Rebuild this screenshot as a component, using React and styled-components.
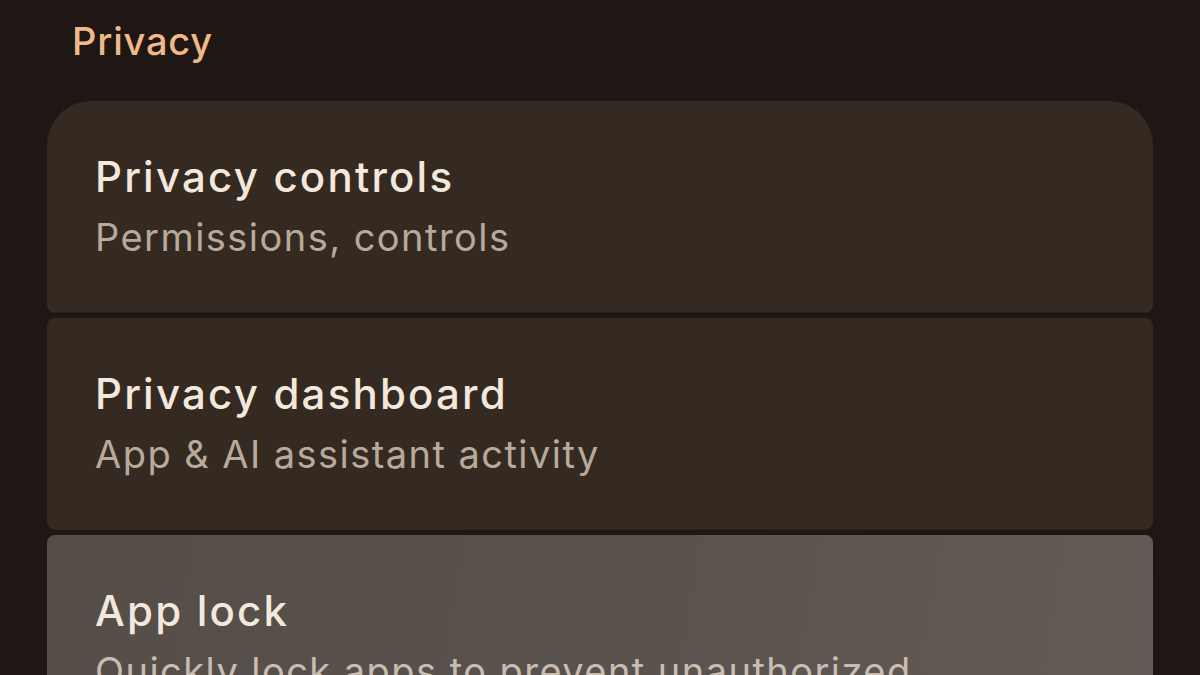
import React from "react";
import styled, { createGlobalStyle } from "styled-components";

const Global = createGlobalStyle`
  html, body { margin: 0; padding: 0; background: #1f1713; }
  body { font-family: Inter, "Open Sans", sans-serif; }
`;

const Screen = styled.div`
  width: 1200px;
  height: 675px;
  overflow: hidden;
  background: #1f1713;
  padding: 0 47px;
  box-sizing: border-box;
`;

const Header = styled.h2`
  margin: 0;
  padding: 16px 0 0 25px;
  height: 101px;
  box-sizing: border-box;
  font-size: 38px;
  font-weight: 500;
  line-height: 50px;
  letter-spacing: 0.8px;
  color: #f1b98a;
`;

const List = styled.div`
  display: flex;
  flex-direction: column;
  gap: 5px;
`;

const Card = styled.div`
  height: 212px;
  box-sizing: border-box;
  padding: 50px 48px 0;
  background: ${(p) =>
    p.$active
      ? "linear-gradient(100deg, #554d47 0%, #5a524c 55%, #635b54 100%)"
      : "#342a21"};
  border-radius: ${(p) => (p.$first ? "44px 44px 8px 8px" : "8px")};
  box-shadow: inset 0 -1px 0 rgba(0, 0, 0, 0.15);
`;

const Title = styled.div`
  font-size: 42px;
  font-weight: 500;
  line-height: 52px;
  letter-spacing: 2.2px;
  color: #f3e8dd;
`;

const Subtitle = styled.div`
  margin-top: 5px;
  font-size: 38px;
  font-weight: 400;
  line-height: 58px;
  letter-spacing: 1.45px;
  color: ${(p) => (p.$active ? "#c9bdb2" : "#b7aa9d")};
  white-space: nowrap;
`;

const items = [
  { title: "Privacy controls", sub: "Permissions, controls" },
  { title: "Privacy dashboard", sub: "App & AI assistant activity" },
  { title: "App lock", sub: "Quickly lock apps to prevent unauthorized", active: true },
];

export default function App() {
  return (
    <>
      <Global />
      <Screen>
        <Header>Privacy</Header>
        <List>
          {items.map((it, i) => (
            <Card key={it.title} $first={i === 0} $active={it.active}>
              <Title>{it.title}</Title>
              <Subtitle $active={it.active}>{it.sub}</Subtitle>
            </Card>
          ))}
        </List>
      </Screen>
    </>
  );
}
